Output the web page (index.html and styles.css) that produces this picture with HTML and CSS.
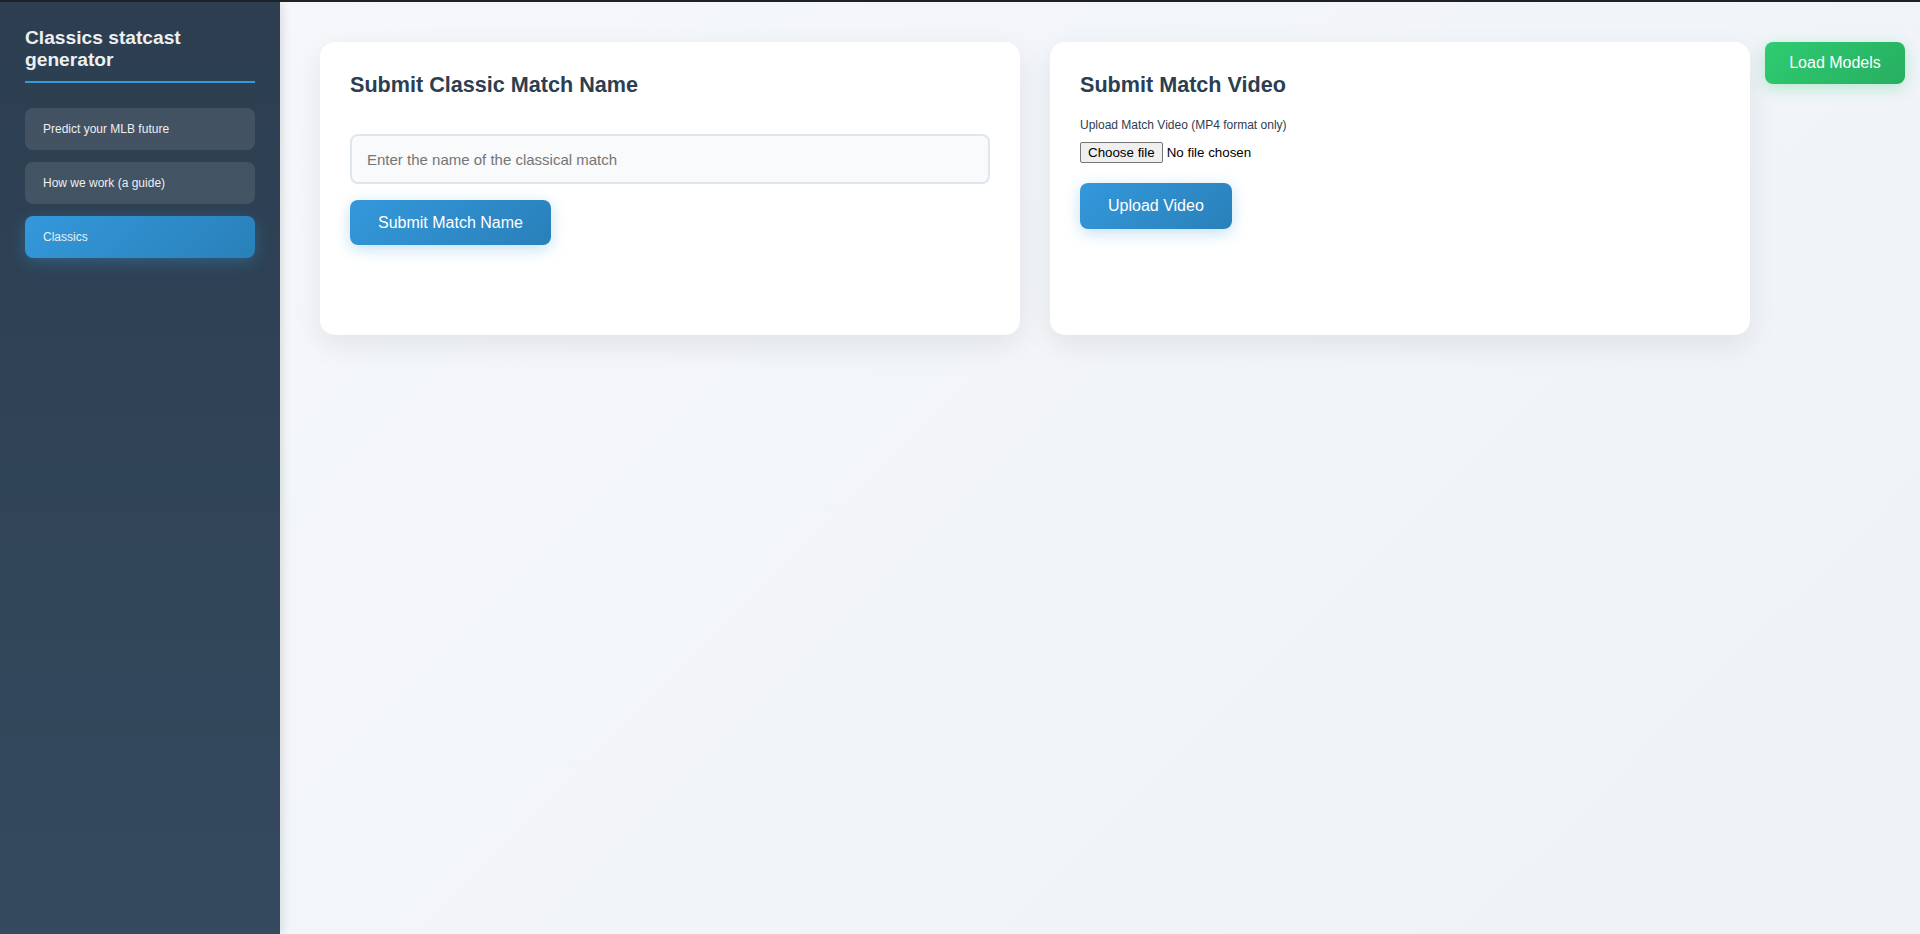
FILE: index.html
```html
<!DOCTYPE html>
<html lang="en">
<head>
<meta charset="utf-8">
<title>Classics statcast generator</title>
<link rel="stylesheet" href="styles.css">
</head>
<body>
<div class="app">
  <aside class="sidebar">
    <h1 class="brand">Classics statcast generator</h1>
    <nav class="nav">
      <a class="nav-item" href="#">Predict your MLB future</a>
      <a class="nav-item" href="#">How we work (a guide)</a>
      <a class="nav-item active" href="#">Classics</a>
    </nav>
  </aside>
  <main class="main">
    <div class="cards">
      <section class="card">
        <h2 class="card-title">Submit Classic Match Name</h2>
        <form class="form form-name">
          <input class="text-input" type="text" placeholder="Enter the name of the classical match">
          <button class="btn btn-blue" type="button">Submit Match Name</button>
        </form>
      </section>
      <section class="card">
        <h2 class="card-title">Submit Match Video</h2>
        <form class="form">
          <label class="file-label" for="video">Upload Match Video (MP4 format only)</label>
          <label class="file-picker">
            <input class="file-input" id="video" type="file" accept="video/mp4">
            <span class="file-button">Choose file</span>
            <span class="file-name">No file chosen</span>
          </label>
          <button class="btn btn-blue btn-upload" type="button">Upload Video</button>
        </form>
      </section>
    </div>
    <button class="btn btn-green load-models" type="button">Load Models</button>
  </main>
</div>
</body>
</html>
```

FILE: styles.css
```css
* { box-sizing: border-box; }
html, body { margin: 0; padding: 0; }
body {
  font-family: "Liberation Sans", Arial, sans-serif;
  background: #eef2f7;
  border-top: 2px solid #1e2226;
}
.app {
  display: flex;
  min-height: 932px;
}
.sidebar {
  width: 280px;
  flex-shrink: 0;
  padding: 25px 25px;
  background: linear-gradient(180deg, #2c3e50 0%, #354a5f 100%);
  box-shadow: 2px 0 10px rgba(0, 0, 0, 0.12);
  position: relative;
  z-index: 1;
}
.brand {
  margin: 0 0 25px;
  padding-bottom: 10px;
  font-size: 19.2px;
  line-height: 22px;
  font-weight: 700;
  color: #ecf0f1;
  border-bottom: 2px solid #3498db;
}
.nav {
  display: flex;
  flex-direction: column;
  gap: 12px;
}
.nav-item {
  display: flex;
  align-items: center;
  height: 42px;
  padding: 0 18px;
  border-radius: 8px;
  background: rgba(255, 255, 255, 0.1);
  color: #ecf0f1;
  font-size: 12px;
  text-decoration: none;
}
.nav-item.active {
  background: linear-gradient(135deg, #3498db, #2980b9);
  box-shadow: 0 4px 15px rgba(52, 152, 219, 0.35);
}
.main {
  flex: 1;
  padding: 40px;
  position: relative;
  background: linear-gradient(135deg, #f5f7fa 0%, #eef2f7 100%);
}
.cards {
  display: grid;
  grid-template-columns: 700px 700px;
  gap: 30px;
  align-items: start;
}
.card {
  background: #ffffff;
  border-radius: 15px;
  padding: 30px;
  min-height: 293px;
  box-shadow: 0 10px 30px rgba(0, 0, 0, 0.08);
}
.card-title {
  margin: 0 0 21px;
  font-size: 21.6px;
  line-height: 25px;
  font-weight: 700;
  color: #2c3e50;
}
.form {
  display: flex;
  flex-direction: column;
  align-items: flex-start;
}
.form-name { padding-top: 16px; }
.text-input {
  width: 100%;
  height: 50px;
  padding: 0 15px;
  border: 2px solid #dfe6ee;
  border-radius: 8px;
  background: #f8fafc;
  font-family: "Liberation Sans", Arial, sans-serif;
  font-size: 15px;
  color: #2c3e50;
  margin-bottom: 16px;
}
.text-input::placeholder { color: #757575; }
.file-label {
  display: block;
  font-size: 12px;
  color: #2c3e50;
  margin-bottom: 10px;
}
.file-picker {
  display: flex;
  align-items: center;
  gap: 4px;
  margin-bottom: 20px;
  font-family: "Liberation Sans", Arial, sans-serif;
  font-size: 13.333px;
  color: #000000;
  cursor: pointer;
}
.file-input {
  position: absolute;
  width: 1px;
  height: 1px;
  opacity: 0;
  overflow: hidden;
}
.file-button {
  display: inline-flex;
  align-items: center;
  height: 21px;
  padding: 0 7px;
  background: #efefef;
  border: 1px solid #767676;
  border-radius: 2px;
  color: #000000;
}
.btn {
  border: none;
  border-radius: 8px;
  padding: 13.5px 28px;
  font-family: "Liberation Sans", Arial, sans-serif;
  font-size: 16px;
  line-height: 18.4px;
  color: #ffffff;
  cursor: pointer;
}
.btn-blue {
  background: linear-gradient(135deg, #3498db, #2980b9);
  box-shadow: 0 4px 15px rgba(52, 152, 219, 0.3);
}
.btn-upload { padding: 14px 28px; }
.btn-green {
  background: linear-gradient(135deg, #2ecc71, #27ae60);
  box-shadow: 0 4px 15px rgba(46, 204, 113, 0.3);
  padding: 12px 24px;
}
.load-models {
  position: absolute;
  top: 40px;
  right: 15px;
  width: 140px;
}
```
